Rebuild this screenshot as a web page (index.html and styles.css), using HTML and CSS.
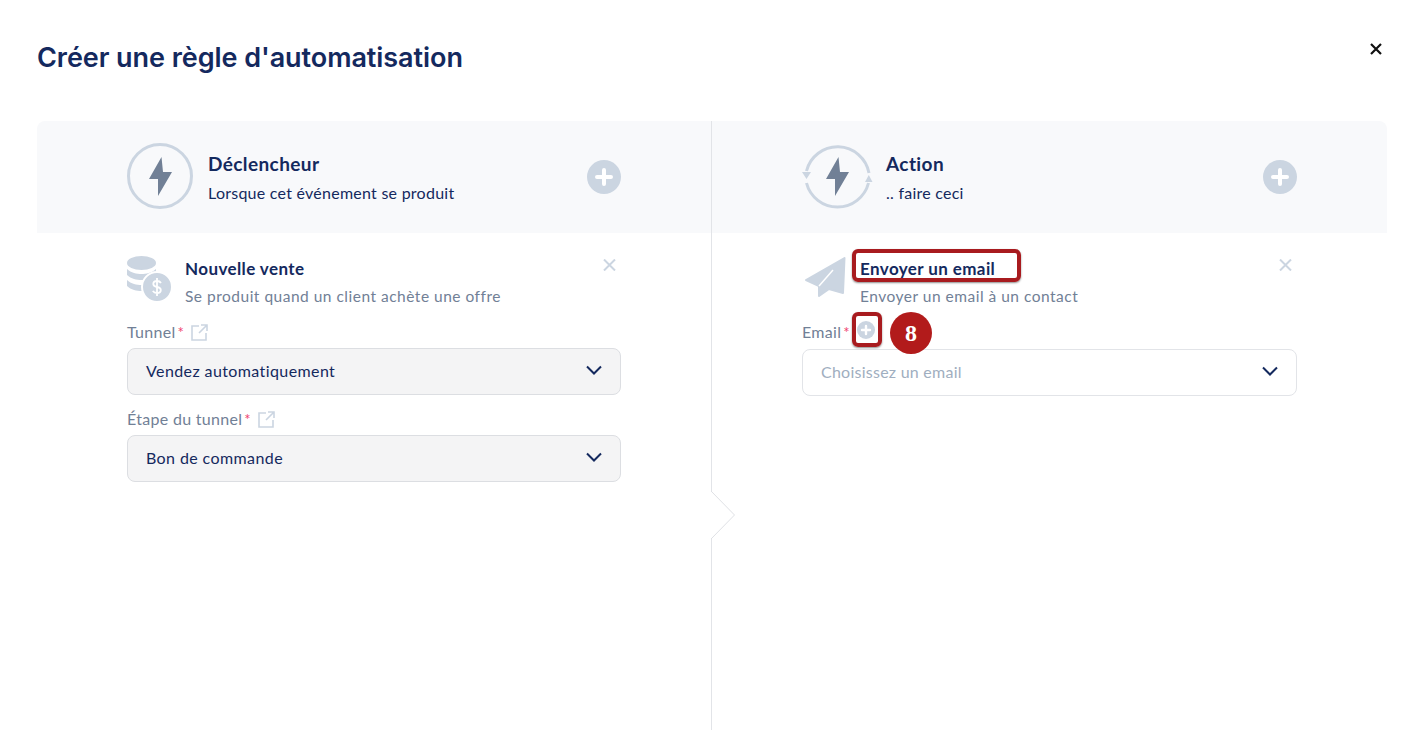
FILE: index.html
```html
<!DOCTYPE html>
<html>
<head>
    <title>Créer une règle d'automatisation</title>
    <link rel="stylesheet" href="styles.css">
</head>
<body>
    <div class="modal">
        <div class="modal-top">
            <h1>Créer une règle d'automatisation</h1>
            <svg class="modal-close" width="12" height="12" viewBox="0 0 12 12"><path d="M1 1l10 10M11 1L1 11" stroke="#111" stroke-width="2.2" fill="none"/></svg>
        </div>

        <div class="rule">
            <div class="col col-left">
                <div class="col-head">
                    <svg class="head-icon" width="66" height="66" viewBox="0 0 66 66">
                        <circle cx="33" cy="33" r="31.5" fill="none" stroke="#cbd5e1" stroke-width="3"/>
                        <path d="M34.500 14L22 36h9v17l14-24h-9z" fill="#718096"/>
                    </svg>
                    <div class="head-text">
                        <div class="head-title">Déclencheur</div>
                        <div class="head-sub">Lorsque cet événement se produit</div>
                    </div>
                    <svg class="head-plus" width="34" height="34" viewBox="0 0 34 34">
                        <circle cx="17" cy="17" r="17" fill="#cbd5e1"/>
                        <path d="M17 10v14M10 17h14" stroke="#fff" stroke-width="4" stroke-linecap="round"/>
                    </svg>
                </div>
                <div class="col-body">
                    <div class="item">
                        <svg class="item-icon" width="45" height="46" viewBox="0 0 45 46">
                            <ellipse cx="14.500" cy="7" rx="14.500" ry="7" fill="#cbd5e1"/>
                            <path d="M0 13c4 4 10 5 14.500 5s10.500-1 14.500-5v6c-4 4-10 5-14.500 5S4 23 0 19z" fill="#cbd5e1"/>
                            <path d="M0 24c4 4 10 5 14.500 5s10.500-1 14.500-5v6c-4 4-10 5-14.500 5S4 34 0 30z" fill="#cbd5e1"/>
                            <circle cx="30" cy="31" r="15" fill="#cbd5e1" stroke="#fff" stroke-width="2"/>
                            <path d="M34 27c-.8-1.300-2.300-2-4-2-2 0-3.700 1-3.700 3s1.700 2.600 3.700 3 3.800 1 3.800 3-1.800 3-3.800 3c-1.800 0-3.400-.8-4.200-2.100M30 22v18" fill="none" stroke="#fff" stroke-width="1.800"/>
                        </svg>
                        <div class="item-text">
                            <div class="item-title">Nouvelle vente</div>
                            <div class="item-sub">Se produit quand un client achète une offre</div>
                        </div>
                        <svg class="item-close" width="13" height="12" viewBox="0 0 13 12"><path d="M1 .5l11 11M12 .5l-11 11" stroke="#cbd5e1" stroke-width="2" fill="none"/></svg>
                    </div>

                    <div class="field-label">Tunnel<span class="req">*</span>
                        <svg class="ext" width="17" height="17" viewBox="0 0 17 17"><path d="M8 2H1v14h14V9M8 9l7.500-7.500M10 1h6v6" fill="none" stroke="#cbd5e1" stroke-width="1.600"/></svg>
                    </div>
                    <div class="select filled">
                        <span>Vendez automatiquement</span>
                        <svg width="16" height="10" viewBox="0 0 16 10"><path d="M1 1.500l7 7 7-7" fill="none" stroke="#14295e" stroke-width="2"/></svg>
                    </div>

                    <div class="field-label second">Étape du tunnel<span class="req">*</span>
                        <svg class="ext" width="17" height="17" viewBox="0 0 17 17"><path d="M8 2H1v14h14V9M8 9l7.500-7.500M10 1h6v6" fill="none" stroke="#cbd5e1" stroke-width="1.600"/></svg>
                    </div>
                    <div class="select filled">
                        <span>Bon de commande</span>
                        <svg width="16" height="10" viewBox="0 0 16 10"><path d="M1 1.500l7 7 7-7" fill="none" stroke="#14295e" stroke-width="2"/></svg>
                    </div>
                </div>
            </div>

            <div class="col col-right">
                <div class="col-head">
                    <svg class="head-icon action" width="71" height="68" viewBox="0 0 71 68">
                        <path d="M4.500 28A32 32 0 0 1 67 30M66.500 40A32 32 0 0 1 4.500 40" fill="none" stroke="#cbd5e1" stroke-width="3"/>
                        <path d="M0 29h9l-4.500 7zM63 39h7.500l-3.700-7z" fill="#cbd5e1"/>
                        <path d="M36.500 14L24 36h9v17l14-24h-9z" fill="#718096"/>
                    </svg>
                    <div class="head-text">
                        <div class="head-title">Action</div>
                        <div class="head-sub">.. faire ceci</div>
                    </div>
                    <svg class="head-plus" width="34" height="34" viewBox="0 0 34 34">
                        <circle cx="17" cy="17" r="17" fill="#cbd5e1"/>
                        <path d="M17 10v14M10 17h14" stroke="#fff" stroke-width="4" stroke-linecap="round"/>
                    </svg>
                </div>
                <div class="col-body">
                    <div class="item">
                        <svg class="item-icon send" width="45" height="44" viewBox="0 0 45 44">
                            <path d="M42.500 2L4 24l13 6v10l10-7 14 4z" fill="#cbd5e1" stroke="#cbd5e1" stroke-width="2" stroke-linejoin="round"/>
                            <path d="M17 30l14-16" stroke="#fff" stroke-width="1.500" fill="none"/>
                        </svg>
                        <div class="item-text">
                            <div class="item-title">Envoyer un email</div>
                            <div class="item-sub">Envoyer un email à un contact</div>
                        </div>
                        <svg class="item-close" width="13" height="12" viewBox="0 0 13 12"><path d="M1 .5l11 11M12 .5l-11 11" stroke="#cbd5e1" stroke-width="2" fill="none"/></svg>
                    </div>

                    <div class="field-label email-label">Email<span class="req">*</span>
                        <svg class="mini-plus" width="18" height="18" viewBox="0 0 18 18">
                            <circle cx="9" cy="9" r="9" fill="#cbd5e1"/>
                            <path d="M9 5v8M5 9h8" stroke="#fff" stroke-width="2.400" stroke-linecap="round"/>
                        </svg>
                    </div>
                    <div class="select">
                        <span class="placeholder">Choisissez un email</span>
                        <svg width="16" height="10" viewBox="0 0 16 10"><path d="M1 1.500l7 7 7-7" fill="none" stroke="#14295e" stroke-width="2"/></svg>
                    </div>
                </div>
            </div>

            <svg class="notch" width="25" height="50" viewBox="0 0 25 50"><path d="M0 1l23.500 24L0 49" fill="#fff" stroke="#dfe1e5"/></svg>
        </div>
    </div>

    <div class="mark mark-title"></div>
    <div class="mark mark-plus"></div>
    <div class="step">8</div>
</body>
</html>
```

FILE: styles.css
```css
* {
    box-sizing: border-box;
}
html, body {
    margin: 0;
    height: 730px;
    overflow: hidden;
    background: #fff;
}
body {
    font-family: "Lato", "Noto Sans", sans-serif;
    color: #14295e;
    position: relative;
}
.modal {
    padding: 0 31px 0 37px;
    height: 730px;
    display: flex;
    flex-direction: column;
}
.modal-top {
    height: 121px;
    display: flex;
    justify-content: space-between;
    padding-top: 41px;
}
.modal-top h1 {
    margin: 0;
    font-family: "Inter", sans-serif;
    font-size: 27px;
    line-height: 33px;
    font-weight: 600;
    letter-spacing: -0.06px;
    color: #14295e;
}
.modal-close {
    margin: 2px 0 0;
    position: relative;
    left: -5px;
}
.rule {
    flex: 1;
    display: flex;
    position: relative;
}
.col {
    display: flex;
    flex-direction: column;
}
.col-left {
    width: 675px;
    border-right: 1px solid #e2e4e8;
}
.col-right {
    width: 675px;
}
.col-head {
    height: 112px;
    background: #f8f9fb;
    padding: 0 90px;
    display: flex;
    align-items: center;
}
.col-left .col-head {
    border-top-left-radius: 8px;
}
.col-right .col-head {
    border-top-right-radius: 8px;
}
.head-icon {
    flex-shrink: 0;
    margin: 0 15px 2px 0;
}
.head-icon.action {
    margin: 0 13px 0 0;
}
.head-text {
    flex: 1;
    margin-top: 1px;
}
.head-title {
    font-size: 19px;
    line-height: 22px;
    font-weight: 700;
    letter-spacing: 0.4px;
}
.head-sub {
    font-size: 16px;
    line-height: 20px;
    margin-top: 8px;
    letter-spacing: 0.25px;
}
.col-body {
    padding: 23px 90px 0;
}
.item {
    display: flex;
    height: 64px;
    position: relative;
}
.item-icon {
    flex-shrink: 0;
    margin-right: 13px;
}
.item-icon.send {
    margin: 0 13px 0 0;
}
.item-text {
    flex: 1;
}
.item-title {
    font-size: 17px;
    line-height: 20px;
    margin-top: 3px;
    font-weight: 700;
    letter-spacing: 0.4px;
}
.item-sub {
    font-size: 15.500px;
    line-height: 20px;
    margin-top: 7px;
    color: #718096;
    letter-spacing: 0.5px;
}
.item-close {
    margin: 3px 5px 0 0;
}
.field-label {
    height: 24px;
    font-size: 16px;
    line-height: 20px;
    color: #718096;
    display: flex;
    align-items: center;
    letter-spacing: 0.3px;
    margin-bottom: 4px;
}
.field-label.second {
    margin-top: 12px;
}
.email-label {
    margin-bottom: 5px;
}
.req {
    color: #f0426f;
    margin-left: 2px;
    font-size: 15px;
}
.ext {
    margin-left: 7px;
}
.mini-plus {
    margin: 0 0 4px 7px;
}
.select {
    height: 47px;
    border: 1px solid #e2e4e8;
    border-radius: 8px;
    padding: 0 18px 2px;
    display: flex;
    align-items: center;
    justify-content: space-between;
    font-size: 16px;
    letter-spacing: 0.4px;
}
.select svg {
    margin-bottom: 1px;
}
.select.filled {
    background: #f4f4f5;
    border-color: #dcdee2;
}
.placeholder {
    color: #a0aec0;
    letter-spacing: 0.25px;
}
.notch {
    position: absolute;
    left: 674px;
    top: 369px;
}
.mark {
    position: absolute;
    border: 4px solid #a81b1f;
    border-radius: 6px;
    box-shadow: 0 1px 2px rgba(0, 0, 0, 0.45);
}
.mark-title {
    left: 852px;
    top: 249px;
    width: 169px;
    height: 33px;
}
.mark-plus {
    left: 852px;
    top: 312px;
    width: 30px;
    height: 35px;
}
.step {
    position: absolute;
    left: 890px;
    top: 312px;
    width: 42px;
    height: 42px;
    border-radius: 50%;
    background: #b21b1b;
    color: #fff;
    font-family: "Liberation Serif", serif;
    font-weight: 700;
    font-size: 24px;
    line-height: 43px;
    text-align: center;
}
```
